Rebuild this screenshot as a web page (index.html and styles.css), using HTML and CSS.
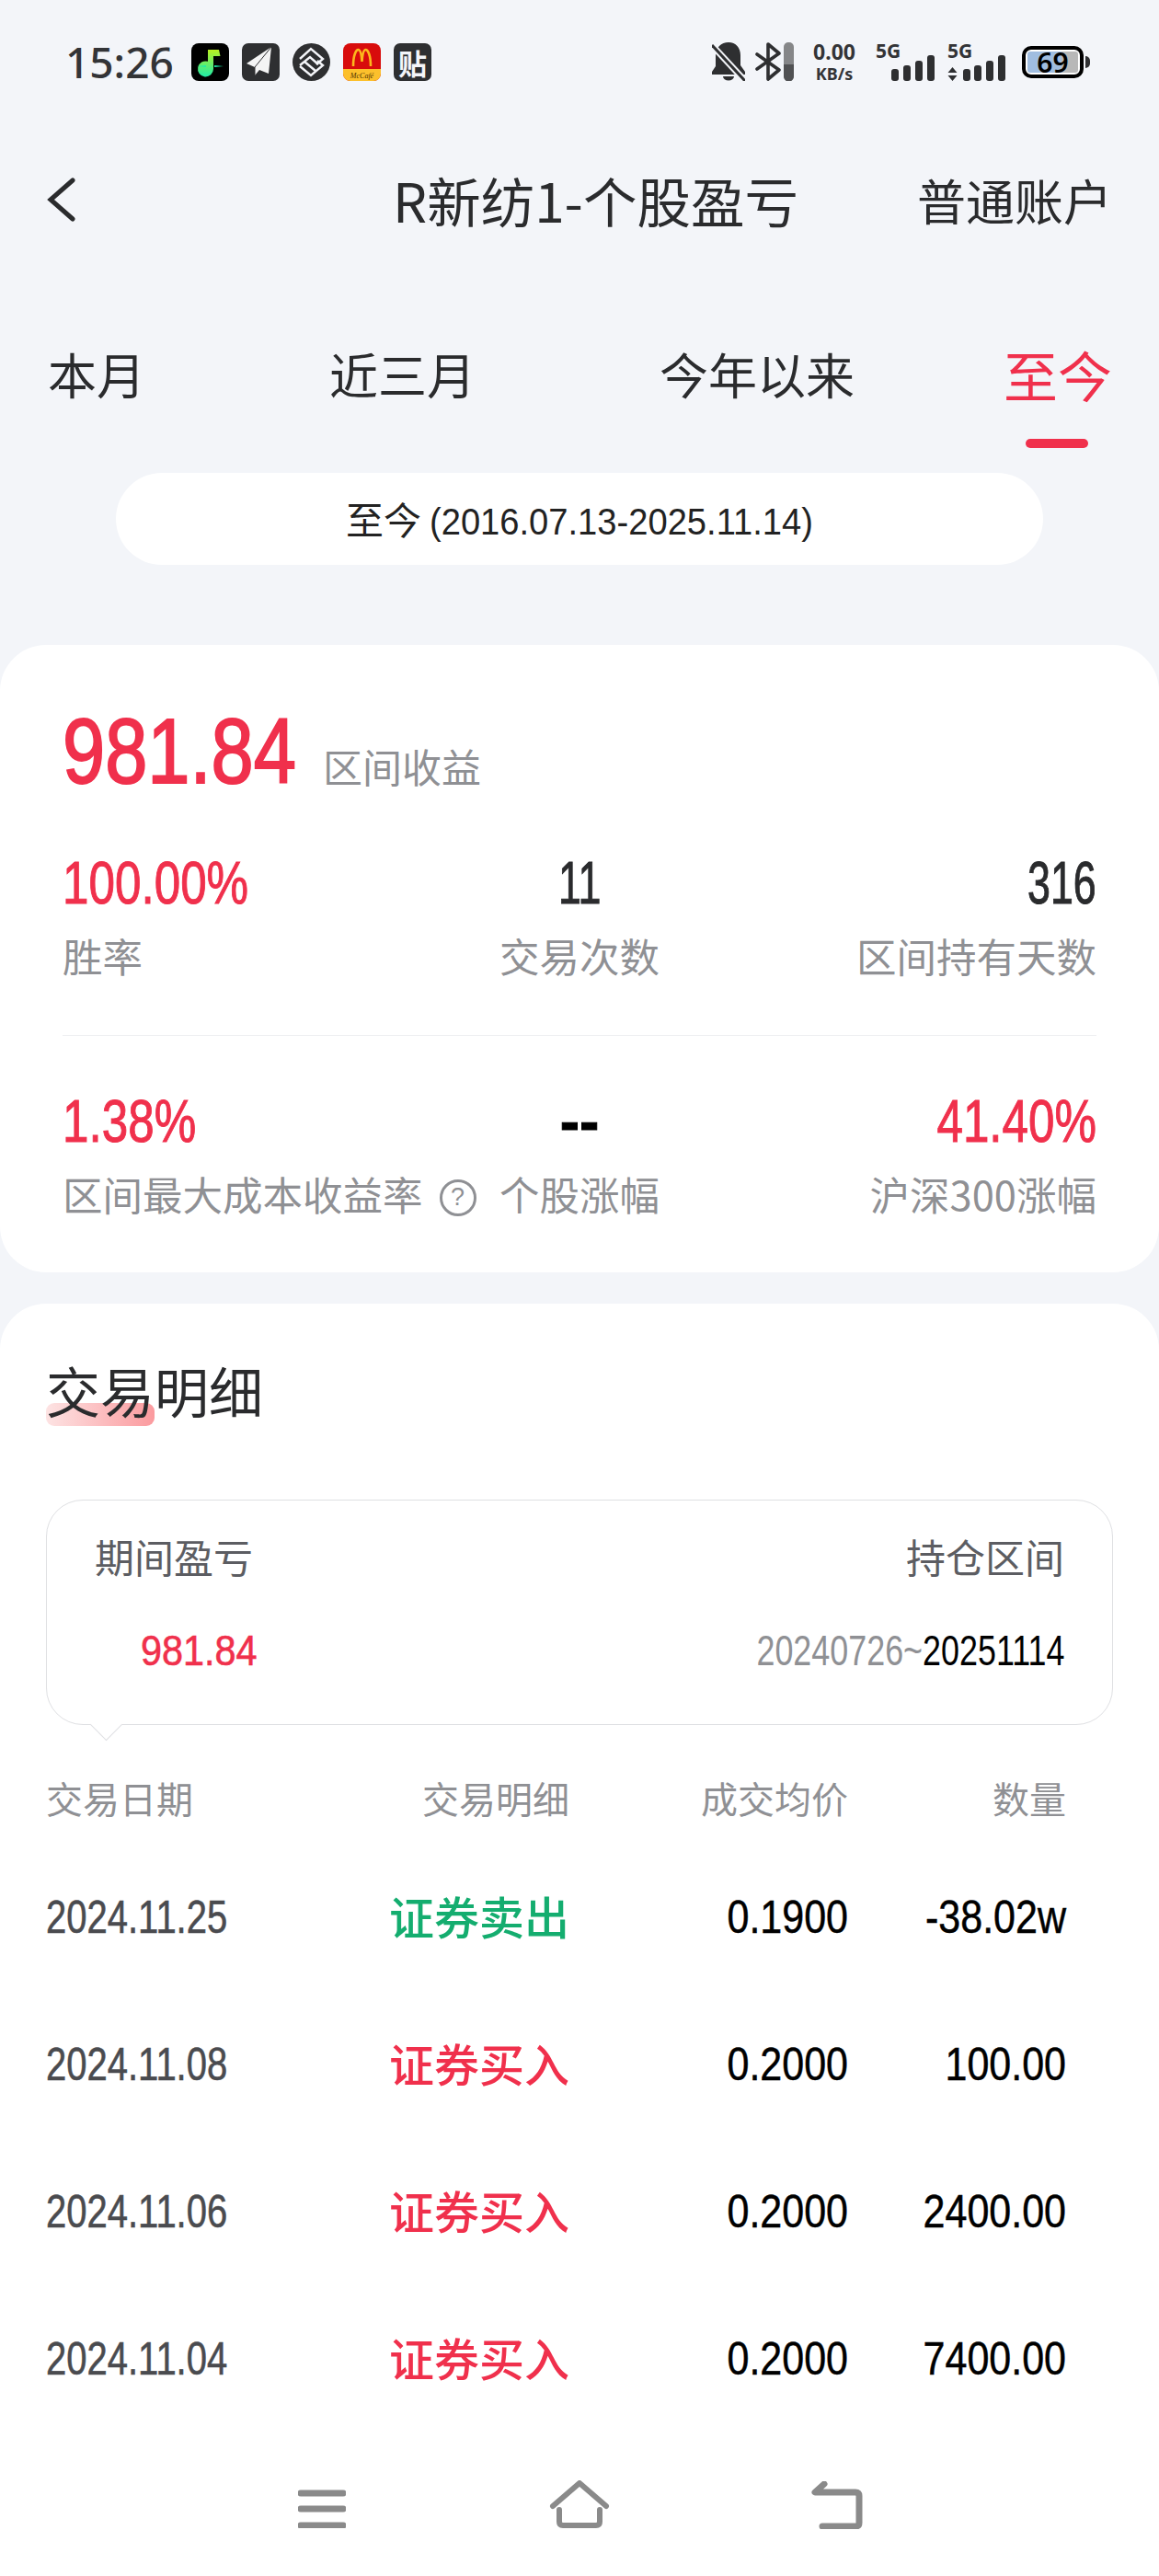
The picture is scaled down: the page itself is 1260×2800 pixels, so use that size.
FILE: index.html
```html
<!DOCTYPE html>
<html lang="zh-CN">
<head>
    <meta charset="UTF-8">
    <title>R新纺1-个股盈亏</title>
    <link rel="stylesheet" href="styles.css">
</head>
<body>

    <!-- 状态栏 -->
    <div class="statusbar">
        <span class="clock">15:26</span>
        <div class="apps">
            <svg class="app" viewBox="0 0 41 41"><defs><linearGradient id="noteFill" x1="0" y1="0" x2="0" y2="1"><stop offset="0" stop-color="#b8ee20"/><stop offset="1" stop-color="#20eca8"/></linearGradient></defs><rect width="41" height="41" rx="8" fill="#000"/><path d="M18 7h12l1.500 7H24v14a8.500 8.500 0 1 1-6-8.200z" fill="url(#noteFill)"/><path d="M6 25l10-1v2zM35 25l-10-1v2z" fill="#20eca8"/></svg>
            <svg class="app" viewBox="0 0 41 41"><rect width="41" height="41" rx="7" fill="#2e2f31"/><path d="M32 4L5 22l9 4v9l5-6 10 4z" fill="#f4f4f4"/><path d="M32 4L14 26v9" fill="none" stroke="#2e2f31" stroke-width="1"/></svg>
            <svg class="app" viewBox="0 0 41 41"><circle cx="20.500" cy="20.500" r="20.500" fill="#2e2f31"/><g fill="none" stroke="#f4f5f9" stroke-width="2.400"><path d="M8 17L20 6l13 11-7 6"/><path d="M8 24l11-9 9 8"/><path d="M13 20l12 10"/><path d="M8 25l12 10 13-11-6-5"/></g></svg>
            <svg class="app" viewBox="0 0 41 41"><rect width="41" height="41" rx="8" fill="#d80c0c"/><path d="M0 28h41v5a8 8 0 0 1-8 8H8a8 8 0 0 1-8-8z" fill="#fcc02c"/><path d="M11 25c0-12 3-18 5.500-18 2.500 0 3.500 6 4 13 .5-7 1.500-13 4-13 2.500 0 5.500 6 5.500 18" fill="none" stroke="#fcb81c" stroke-width="2.600"/><text x="20.500" y="38" text-anchor="middle" class="mccafe">McCafé</text></svg>
            <span class="app tie">贴</span>
        </div>
        <div class="sysicons">
            <svg class="bell" viewBox="0 0 36 42"><path d="M18 0c8 0 13 6 13 14v11l5 7v3H0v-3l4-6V14C4 6 10 0 18 0z" fill="#2e2f31"/><path d="M12 37h12a6 4.500 0 0 1-12 0z" fill="#2e2f31"/><path d="M0 3l36 39" stroke="#f3f5f9" stroke-width="7"/><path d="M0 3l36 39" stroke="#2e2f31" stroke-width="3"/></svg>
            <svg class="bt" viewBox="0 0 42 42"><path d="M2 13l24 17-12 10V2l12 10L2 29" fill="none" stroke="#2e2f31" stroke-width="3.600" stroke-linejoin="round" stroke-linecap="round"/><rect x="31" width="11" height="42" rx="5" fill="#858688"/><path d="M31 24h11v13a5 5 0 0 1-11 0z" fill="#505153"/></svg>
            <div class="speed"><span>0.00</span><span>KB/s</span></div>
            <div class="signal">
                <span class="gen">5G</span>
                <svg viewBox="0 0 47 28"><rect y="15" width="8" height="13" rx="3" fill="#2e2f31"/><rect x="13" y="11" width="8" height="17" rx="3" fill="#2e2f31"/><rect x="26" y="6" width="8" height="22" rx="3" fill="#2e2f31"/><rect x="39" width="8" height="28" rx="3" fill="#2e2f31"/></svg>
            </div>
            <div class="signal signal-2">
                <span class="gen">5G</span>
                <svg viewBox="0 0 63 28"><path d="M5.500 13l5 6H.500zM5.500 28l5-6H.500z" fill="#2e2f31"/><rect x="17" y="15" width="8" height="13" rx="3" fill="#2e2f31"/><rect x="29" y="11" width="8" height="17" rx="3" fill="#2e2f31"/><rect x="42" y="6" width="8" height="22" rx="3" fill="#2e2f31"/><rect x="55" width="8" height="28" rx="3" fill="#2e2f31"/></svg>
            </div>
            <div class="battery"><span class="level"></span><span class="pct">69</span></div>
            <span class="nub"></span>
        </div>
    </div>

    <!-- 导航 -->
    <div class="nav">
        <svg class="back" viewBox="0 0 32 48"><path d="M29 3L5 24l24 21" fill="none" stroke="#2a2b2d" stroke-width="5" stroke-linecap="round"/></svg>
        <span class="nav-title">R新纺1-个股盈亏</span>
        <span class="nav-right">普通账户</span>
    </div>

    <div class="tabs">
        <span class="tab">本月</span>
        <span class="tab">近三月</span>
        <span class="tab">今年以来</span>
        <span class="tab active">至今</span>
    </div>
    <div class="range">至今 <span class="range-dates">(2016.07.13-2025.11.14)</span></div>

    <!-- 收益概览 -->
    <div class="card summary">
        <div class="profit">
            <span class="profit-val num">981.84</span>
            <span class="profit-label">区间收益</span>
        </div>
        <div class="stats">
            <div class="stat"><b class="val red num">100.00%</b><span class="lbl">胜率</span></div>
            <div class="stat mid"><b class="val narrow num">11</b><span class="lbl">交易次数</span></div>
            <div class="stat end"><b class="val narrow num">316</b><span class="lbl">区间持有天数</span></div>
        </div>
        <div class="stats stats-2">
            <div class="stat"><b class="val red num">1.38%</b><span class="lbl">区间最大成本收益率<i class="help">?</i></span></div>
            <div class="stat mid"><b class="val dash num">--</b><span class="lbl">个股涨幅</span></div>
            <div class="stat end"><b class="val red num">41.40%</b><span class="lbl">沪深300涨幅</span></div>
        </div>
    </div>

    <!-- 交易明细 -->
    <div class="card detail">
        <h2 class="section-title">交易明细</h2>
        <div class="bubble">
            <div class="bubble-row">
                <span>期间盈亏</span>
                <span>持仓区间</span>
            </div>
            <div class="bubble-row bubble-vals">
                <span class="red num profit-small">981.84</span>
                <span class="num period"><em>20240726~</em>20251114</span>
            </div>
        </div>
        <div class="row head">
            <span>交易日期</span><span>交易明细</span><span>成交均价</span><span>数量</span>
        </div>
        <div class="row">
            <span class="num date">2024.11.25</span><span class="kind green">证券卖出</span><span class="num end-num">0.1900</span><span class="num end-num">-38.02w</span>
        </div>
        <div class="row">
            <span class="num date">2024.11.08</span><span class="kind red">证券买入</span><span class="num end-num">0.2000</span><span class="num end-num">100.00</span>
        </div>
        <div class="row">
            <span class="num date">2024.11.06</span><span class="kind red">证券买入</span><span class="num end-num">0.2000</span><span class="num end-num">2400.00</span>
        </div>
        <div class="row">
            <span class="num date">2024.11.04</span><span class="kind red">证券买入</span><span class="num end-num">0.2000</span><span class="num end-num">7400.00</span>
        </div>
    </div>

    <!-- 系统导航条 -->
    <div class="sysnav">
        <svg viewBox="0 0 52 44" class="nav-menu"><path d="M3 6h46M3 23h46M3 41h46" stroke="#8a8a8a" stroke-width="7" stroke-linecap="round"/></svg>
        <svg viewBox="0 0 66 52" class="nav-home"><path d="M4 28L33 3l29 25M11 32v13q0 4 4 4h36q4 0 4-4V32" fill="none" stroke="#8a8a8a" stroke-width="6" stroke-linecap="round" stroke-linejoin="round"/></svg>
        <svg viewBox="0 0 56 52" class="nav-back"><path d="M14 3L4 12h44q4 0 4 4v29q0 4-4 4H12" fill="none" stroke="#8a8a8a" stroke-width="7" stroke-linecap="round" stroke-linejoin="round"/></svg>
    </div>

</body>
</html>
```

FILE: styles.css
```css
body {
    margin: 0;
    width: 1260px;
    height: 2800px;
    overflow: hidden;
    background-color: #f3f5f9;
    font-family: "Noto Sans CJK SC", "Noto Sans", sans-serif;
    color: #2a2b2d;
}
.statusbar {
    display: flex;
    align-items: center;
    height: 134px;
    padding: 0 75px 0 71px;
}
.clock {
    width: 118px;
    font-family: "Noto Sans", sans-serif;
    font-size: 46px;
    font-weight: 500;
    color: #333437;
}
.apps {
    display: flex;
    gap: 14px;
    margin-left: 19px;
}
.app {
    width: 41px;
    height: 41px;
}
.mccafe {
    font-family: "Liberation Serif", serif;
    font-style: italic;
    font-size: 8px;
    fill: #503000;
}
.tie {
    border-radius: 7px;
    background: #2e2f31;
    text-align: center;
    font-size: 31px;
    font-weight: 700;
    line-height: 41px;
    color: #f4f5f9;
}
.sysicons {
    display: flex;
    align-items: center;
    margin-left: auto;
}
.bell {
    width: 36px;
    height: 42px;
}
.bt {
    width: 42px;
    height: 42px;
    margin-left: 11px;
}
.speed {
    display: flex;
    flex-direction: column;
    align-items: center;
    width: 52px;
    margin-left: 18px;
    font-family: "Noto Sans", sans-serif;
    font-weight: 700;
    color: #333437;
}
.speed span:first-child {
    font-size: 23px;
    line-height: 25px;
}
.speed span:last-child {
    font-size: 18px;
    line-height: 22px;
}
.signal {
    position: relative;
    width: 47px;
    height: 42px;
    margin-left: 36px;
}
.signal svg {
    position: absolute;
    left: 0;
    bottom: 0;
    width: 47px;
    height: 28px;
}
.gen {
    position: absolute;
    left: -17px;
    top: -4px;
    font-family: "Noto Sans", sans-serif;
    font-weight: 700;
    font-size: 21px;
    line-height: 26px;
    color: #333437;
}
.signal-2 {
    width: 63px;
    margin-left: 14px;
}
.signal-2 svg {
    width: 63px;
}
.signal-2 .gen {
    left: 0;
}
.battery {
    position: relative;
    width: 67px;
    height: 35px;
    box-sizing: border-box;
    margin-left: 18px;
    border: 4px solid #000;
    border-radius: 10px;
    background: #fff;
    padding: 2px;
}
.level {
    display: block;
    height: 100%;
    border-radius: 3px;
    background: linear-gradient(90deg, #a0bde0 68%, #b8b8b8 68%);
}
.pct {
    position: absolute;
    inset: 0;
    text-align: center;
    font-family: "Noto Sans", sans-serif;
    font-size: 30px;
    font-weight: 600;
    line-height: 27px;
    color: #000;
}
.nub {
    width: 5px;
    height: 13px;
    margin-left: 2px;
    background: #2e2f31;
    border-radius: 0 5px 5px 0;
}

/* 导航 */
.nav {
    display: flex;
    align-items: center;
    height: 166px;
    padding: 0 51px 0 50px;
}
.back {
    width: 32px;
    height: 48px;
}
.nav-title {
    margin-left: 345px;
    font-size: 58.500px;
    line-height: 80px;
    white-space: nowrap;
}
.nav-right {
    margin-left: auto;
    font-size: 53px;
}
.tabs {
    display: flex;
    gap: 200px;
    align-items: center;
    height: 120px;
    margin-top: 46px;
    padding-left: 52px;
    font-size: 53px;
}
.tab {
    position: relative;
    white-space: nowrap;
}
.tab.active {
    margin-left: -38px;
    font-size: 59px;
    color: #f0304c;
}
.tab.active::after {
    content: "";
    position: absolute;
    left: 24px;
    bottom: -38px;
    width: 68px;
    height: 10px;
    border-radius: 5px;
    background: #f0304c;
}
.range {
    width: 1008px;
    height: 100px;
    margin: 48px 0 0 126px;
    border-radius: 50px;
    background: #fff;
    text-align: center;
    font-size: 41px;
    line-height: 98px;
    color: #222;
    white-space: nowrap;
}
.range-dates {
    display: inline-block;
    width: 417px;
    transform: scaleX(.93);
    transform-origin: left;
    font-family: "Liberation Sans", sans-serif;
    text-align: left;
}
.card {
    background: #fff;
    border-radius: 50px;
}
.summary {
    height: 682px;
    margin-top: 87px;
    box-sizing: border-box;
    padding: 62px 68px 0;
}
.profit {
    display: flex;
    align-items: baseline;
    gap: 30px;
    height: 106px;
}
.num {
    font-family: "Liberation Sans", sans-serif;
    font-weight: 400;
}
.profit-val {
    display: inline-block;
    width: 253px;
    font-size: 100px;
    line-height: 106px;
    color: #f0304c;
    white-space: nowrap;
    transform: scaleX(.83);
    transform-origin: left;
    -webkit-text-stroke: 2px #f0304c;
}
.profit-label {
    font-size: 43px;
    color: #8f9094;
}
.stats {
    display: grid;
    grid-template-columns: repeat(3, minmax(0, 1fr));
    margin-top: 53px;
    padding-bottom: 57px;
    border-bottom: 1px solid #eeeff1;
}
.stats-2 {
    margin-top: 55px;
    border: 0;
}
.stat {
    display: flex;
    flex-direction: column;
    gap: 12px;
    white-space: nowrap;
}
.stat .val {
    font-size: 64px;
    line-height: 76px;
    transform: scaleX(.8);
    transform-origin: left;
    color: #2a2b2d;
    -webkit-text-stroke: 1px currentColor;
}
.stat .val.narrow {
    transform: scaleX(.7);
}
.stat .val.red {
    color: #f0304c;
}
.stat .val.dash {
    font-weight: 700;
    color: #000;
    transform: none;
}
.stat.mid {
    align-items: center;
}
.stat.mid .val {
    transform-origin: center;
}
.stat.end {
    align-items: flex-end;
}
.stat.end .val {
    transform-origin: right;
}
.lbl {
    font-size: 43.500px;
    line-height: 58px;
    color: #8f9094;
}
.help {
    display: inline-block;
    width: 40px;
    height: 40px;
    margin-left: 18px;
    box-sizing: border-box;
    border: 3px solid #8f9094;
    border-radius: 50%;
    vertical-align: 6px;
    text-align: center;
    font-family: "Liberation Sans", sans-serif;
    font-style: normal;
    font-size: 27px;
    line-height: 33px;
}

/* 明细 */
.detail {
    position: relative;
    z-index: 0;
    height: 1383px;
    margin-top: 34px;
    box-sizing: border-box;
    padding: 52px 50px 0;
}
.section-title {
    position: relative;
    width: max-content;
    margin: 0;
    font-size: 59px;
    font-weight: 400;
    line-height: 84px;
}
.section-title::before {
    content: "";
    position: absolute;
    left: 0;
    top: 56px;
    width: 118px;
    height: 25px;
    border-radius: 9px;
    background: linear-gradient(90deg, #fde3e3, #fb9a9e);
    z-index: -1;
}
.bubble {
    position: relative;
    height: 245px;
    margin-top: 77px;
    box-sizing: border-box;
    padding: 31px 52px 0;
    border: 1px solid #dfe0e3;
    border-radius: 40px;
    background: #fff;
}
.bubble::after {
    content: "";
    position: absolute;
    left: 52px;
    bottom: -13px;
    width: 24px;
    height: 24px;
    background: #fff;
    border-right: 1px solid #dfe0e3;
    border-bottom: 1px solid #dfe0e3;
    transform: rotate(45deg);
}
.bubble-row {
    display: flex;
    justify-content: space-between;
    font-size: 43px;
    line-height: 58px;
    color: #5c5d62;
}
.bubble-vals {
    margin-top: 45px;
    padding-left: 50px;
    font-size: 46px;
}
.profit-small {
    display: inline-block;
    transform: scaleX(.9);
    transform-origin: left;
    -webkit-text-stroke: .6px #f0304c;
}
.period {
    display: inline-block;
    transform: scaleX(.78);
    transform-origin: right;
    font-size: 46px;
    color: #000;
    white-space: nowrap;
}
.period em {
    font-style: normal;
    color: #8f9094;
}
.red {
    color: #f0304c;
}
.green {
    color: #14ad6f;
}
.row {
    display: grid;
    grid-template-columns: 300px 269px 303px 237px;
    align-items: center;
    height: 160px;
    font-size: 50px;
}
.row span:not(:first-child) {
    text-align: right;
}
.row.head {
    height: 60px;
    margin: 49px 0 20px;
    font-size: 40px;
    color: #8f9094;
}
.date {
    display: inline-block;
    color: #4a4b4f;
    transform: scaleX(.8);
    transform-origin: left;
    white-space: nowrap;
    -webkit-text-stroke: .6px #4a4b4f;
}
.end-num {
    display: inline-block;
    transform: scaleX(.86);
    transform-origin: right;
    color: #000;
    white-space: nowrap;
    -webkit-text-stroke: .5px #000;
}
.kind {
    font-size: 49px;
    font-weight: 500;
    line-height: 56px;
    margin-top: -4px;
}

/* 系统导航条 */
.sysnav {
    position: absolute;
    left: 0;
    right: 0;
    top: 2660px;
    height: 140px;
    background: #fff;
    z-index: 1;
}
.sysnav svg {
    position: absolute;
}
.nav-menu {
    left: 324px;
    top: 44px;
    width: 52px;
    height: 44px;
}
.nav-home {
    left: 597px;
    top: 36px;
    width: 66px;
    height: 52px;
}
.nav-back {
    left: 882px;
    top: 37px;
    width: 56px;
    height: 52px;
}
```
